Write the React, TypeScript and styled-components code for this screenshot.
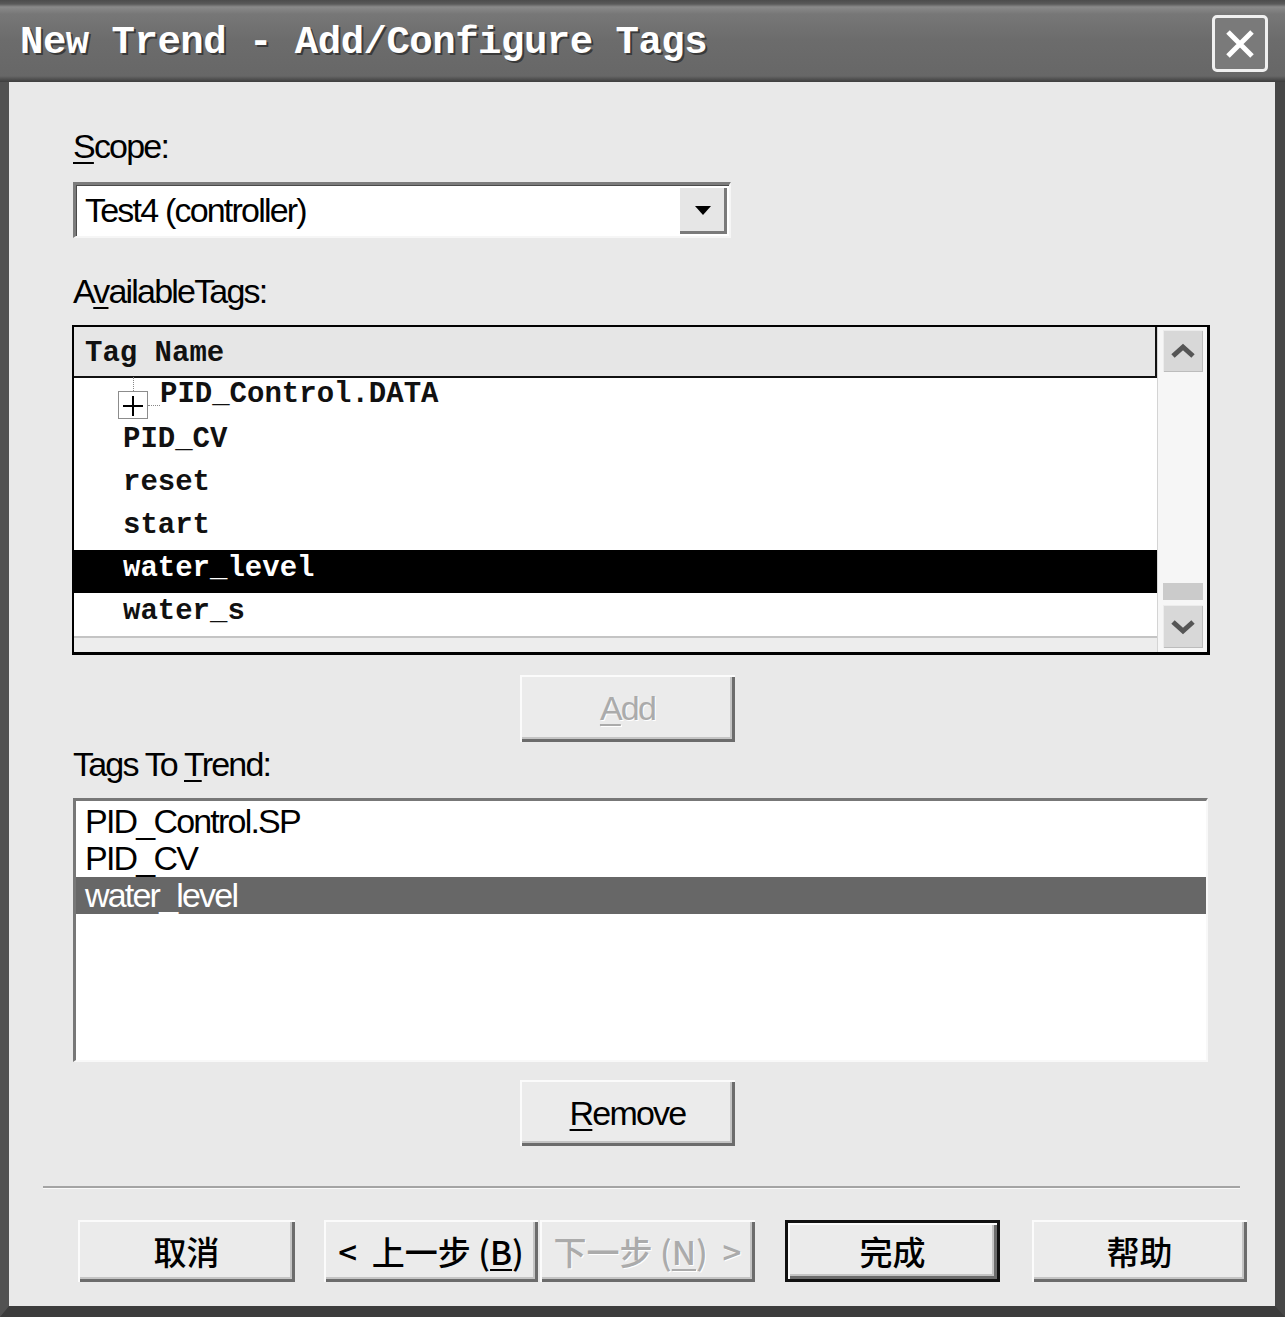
import React from "react";
import styled, { createGlobalStyle } from "styled-components";

const UI_FONT = `"Liberation Sans", Arial, sans-serif`;
const MONO_FONT = `"Liberation Mono", "Courier New", monospace`;
const CJK_FONT = `"Noto Sans CJK SC", "Liberation Sans", sans-serif`;

const GlobalStyle = createGlobalStyle`
  html, body {
    margin: 0;
    padding: 0;
    background: #3c3c3c;
  }
  body {
    font-family: ${UI_FONT};
  }
`;

const Window = styled.div`
  width: 1285px;
  height: 1317px;
  display: flex;
  flex-direction: column;
  overflow: hidden;
`;

const TitleBar = styled.div`
  height: 82px;
  flex: none;
  box-sizing: border-box;
  display: flex;
  align-items: center;
  justify-content: space-between;
  padding: 0 17px 0 20px;
  background: linear-gradient(
    to bottom,
    #4c4c4c 0,
    #5a5a5a 4px,
    #8a8a8a 7px,
    #777777 14px,
    #6c6c6c 40px,
    #676767 76px,
    #4a4a4a 80px,
    #3e3e3e 82px
  );
`;

const Title = styled.div`
  font-family: ${MONO_FONT};
  font-weight: bold;
  font-size: 39px;
  letter-spacing: -0.5px;
  color: #fff;
  text-shadow: 2px 2px 0 #3a3a3a;
  margin-top: 4px;
`;

const CloseButton = styled.div`
  width: 56px;
  height: 57px;
  margin-top: 5px;
  box-sizing: border-box;
  border: 3px solid #f0f0f0;
  border-radius: 5px;
  background: #7a7a7a;
  display: flex;
  align-items: center;
  justify-content: center;
`;

const Body = styled.div`
  flex: 1;
  display: flex;
  flex-direction: column;
  background: #e9e9e9;
  border-left: 9px solid #525252;
  border-right: 10px solid #474747;
  border-bottom: 11px solid #3c3c3c;
`;

const Content = styled.div`
  display: flex;
  flex-direction: column;
  padding: 44px 0 0 64px;
`;

const Label = styled.div<{ $mt: number }>`
  margin-top: ${(p) => p.$mt}px;
  font-family: ${UI_FONT};
  font-size: 34px;
  line-height: 40px;
  letter-spacing: -1.8px;
  color: #000;
`;

const Key = styled.span`
  text-decoration: underline;
  text-decoration-thickness: 2px;
  text-underline-offset: 4px;
`;

const Combo = styled.div`
  margin-top: 16px;
  width: 658px;
  height: 56px;
  box-sizing: border-box;
  background: #fff;
  border-top: 3px solid #7c7c7c;
  border-left: 3px solid #7c7c7c;
  border-right: 2px solid #f6f6f6;
  border-bottom: 2px solid #f6f6f6;
  box-shadow: inset 1px 1px 0 #4a4a4a;
  display: flex;
  align-items: center;
  justify-content: space-between;
  padding: 0 2px 0 9px;
  font-family: ${UI_FONT};
  font-size: 34px;
  letter-spacing: -1.8px;
`;

const DropButton = styled.div`
  width: 48px;
  height: 47px;
  box-sizing: border-box;
  background: #e6e6e6;
  box-shadow: inset 1px 1px 0 #fff, inset -3px -3px 0 #7a7a7a;
  display: flex;
  align-items: center;
  justify-content: center;
`;

const TagList = styled.div`
  margin-top: 14px;
  margin-left: -1px;
  width: 1138px;
  height: 330px;
  box-sizing: border-box;
  border: 2px solid #000;
  border-right-width: 3px;
  border-bottom-width: 3px;
  background: #fff;
  display: flex;
`;

const TagMain = styled.div`
  flex: 1;
  display: flex;
  flex-direction: column;
`;

const TagHeader = styled.div`
  height: 51px;
  flex: none;
  box-sizing: border-box;
  background: #e6e6e6;
  border-bottom: 2px solid #111;
  border-right: 2px solid #111;
  padding: 4px 0 0 11px;
  display: flex;
  align-items: center;
  font-family: ${MONO_FONT};
  font-weight: bold;
  font-size: 29px;
  color: #111;
`;

const TagRow = styled.div<{ $selected?: boolean }>`
  height: 43px;
  flex: none;
  display: flex;
  align-items: flex-start;
  padding-left: 49px;
  background: ${(p) => (p.$selected ? "#000" : "#fff")};
  color: ${(p) => (p.$selected ? "#fff" : "#111")};
  font-family: ${MONO_FONT};
  font-weight: bold;
  font-size: 29px;
  line-height: 38px;
`;

const TreeRow = styled(TagRow)`
  padding-left: 44px;
  line-height: 33px;
`;

const Expander = styled.div`
  position: relative;
  width: 30px;
  height: 28px;
  margin-top: 13px;
  flex: none;
  box-sizing: border-box;
  border: 1px solid #8c8c8c;
  background: #fff;

  &::before {
    content: "";
    position: absolute;
    left: 14px;
    top: -15px;
    height: 14px;
    border-left: 1px dotted #888;
  }
  &::after {
    content: "";
    position: absolute;
    left: 29px;
    top: 13px;
    width: 12px;
    border-top: 1px dotted #888;
  }
`;

const TreeText = styled.span`
  margin-left: 12px;
`;

const HScrollStub = styled.div`
  flex: 1;
  background: #ededed;
  border-top: 2px solid #c4c4c4;
`;

const VScroll = styled.div`
  width: 50px;
  flex: none;
  box-sizing: border-box;
  background: #f6f6f6;
  border-left: 1px solid #d4d4d4;
  display: flex;
  flex-direction: column;
  padding: 3px 4px 4px 5px;
`;

const ScrollButton = styled.div<{ $h: number }>`
  height: ${(p) => p.$h}px;
  flex: none;
  box-sizing: border-box;
  background: #d8d8d8;
  box-shadow: inset 1px 1px 0 #ececec, inset -1px -1px 0 #bcbcbc;
  display: flex;
  align-items: center;
  justify-content: center;
`;

const ScrollTrack = styled.div`
  flex: 1;
`;

const ScrollThumb = styled.div`
  height: 17px;
  flex: none;
  margin-bottom: 5px;
  background: #cbcbcb;
`;

const ButtonLine = styled.div<{ $mt: number }>`
  margin-top: ${(p) => p.$mt}px;
  padding-left: 447px;
  display: flex;
`;

const DlgButton = styled.button<{ $w: number; $h: number; $default?: boolean; $off?: boolean; $cjk?: boolean }>`
  width: ${(p) => p.$w}px;
  height: ${(p) => p.$h}px;
  flex: none;
  box-sizing: border-box;
  margin: 0;
  padding: 0;
  background: #ebebeb;
  border: ${(p) => (p.$default ? "3px solid #111" : "none")};
  box-shadow: inset 2px 2px 0 #fbfbfb, inset -3px -3px 0 #6c6c6c, inset -5px -5px 0 #c4c4c4;
  font-family: ${(p) => (p.$cjk ? CJK_FONT : UI_FONT)};
  font-size: ${(p) => (p.$cjk ? 33 : 34)}px;
  font-weight: ${(p) => (p.$cjk ? 500 : 400)};
  letter-spacing: ${(p) => (p.$cjk ? "0" : "-1.8px")};
  color: ${(p) => (p.$off ? "#ababab" : "#000")};
  text-shadow: ${(p) => (p.$off ? "1px 1px 0 #fff" : "none")};
  white-space: pre;
  display: flex;
  align-items: center;
  justify-content: center;
  cursor: default;
`;

const TrendList = styled.div`
  margin-top: 14px;
  width: 1135px;
  height: 264px;
  box-sizing: border-box;
  background: #fff;
  border-top: 3px solid #777;
  border-left: 3px solid #777;
  border-right: 2px solid #f8f8f8;
  border-bottom: 2px solid #f8f8f8;
  padding-top: 2px;
  display: flex;
  flex-direction: column;
`;

const TrendRow = styled.div<{ $selected?: boolean }>`
  height: 37px;
  flex: none;
  padding-left: 9px;
  background: ${(p) => (p.$selected ? "#676767" : "transparent")};
  color: ${(p) => (p.$selected ? "#fff" : "#000")};
  font-family: ${UI_FONT};
  font-size: 34px;
  line-height: 37px;
  letter-spacing: -1.8px;
  white-space: nowrap;
`;

const Separator = styled.div`
  margin: 40px 0 0 34px;
  width: 1197px;
  height: 3px;
  box-sizing: border-box;
  border-top: 2px solid #a4a4a4;
  border-bottom: 1px solid #fafafa;
`;

const Footer = styled.div`
  margin-top: 31px;
  padding-left: 69px;
  display: flex;
`;

const Gap = styled.div<{ $w: number }>`
  width: ${(p) => p.$w}px;
  flex: none;
`;

const Chevron = ({ dir }: { dir: "up" | "down" }) => (
  <svg width="26" height="16" viewBox="0 0 26 16">
    <polyline
      points={dir === "up" ? "3,13 13,4 23,13" : "3,3 13,12 23,3"}
      fill="none"
      stroke="#555"
      strokeWidth="5"
    />
  </svg>
);

const tags = ["PID_CV", "reset", "start", "water_level", "water_s"];
const trended = ["PID_Control.SP", "PID_CV", "water_level"];

export default function App() {
  return (
    <>
      <GlobalStyle />
      <Window>
        <TitleBar>
          <Title>New Trend - Add/Configure Tags</Title>
          <CloseButton>
            <svg width="34" height="34" viewBox="0 0 34 34">
              <path d="M5 5 L29 29 M29 5 L5 29" stroke="#fff" strokeWidth="5" />
            </svg>
          </CloseButton>
        </TitleBar>
        <Body>
          <Content>
            <Label $mt={0}>
              <Key>S</Key>cope:
            </Label>
            <Combo>
              <span>Test4 (controller)</span>
              <DropButton>
                <svg width="16" height="9" viewBox="0 0 16 9">
                  <polygon points="0,0 16,0 8,9" fill="#000" />
                </svg>
              </DropButton>
            </Combo>

            <Label $mt={33}>
              A<Key>v</Key>ailableTags:
            </Label>
            <TagList>
              <TagMain>
                <TagHeader>Tag Name</TagHeader>
                <TreeRow>
                  <Expander>
                    <svg width="28" height="26" viewBox="0 0 28 26">
                      <path d="M4 14 H24 M14 4 V24" stroke="#000" strokeWidth="2" />
                    </svg>
                  </Expander>
                  <TreeText>PID_Control.DATA</TreeText>
                </TreeRow>
                {tags.map((t) => (
                  <TagRow key={t} $selected={t === "water_level"}>
                    {t}
                  </TagRow>
                ))}
                <HScrollStub />
              </TagMain>
              <VScroll>
                <ScrollButton $h={42}>
                  <Chevron dir="up" />
                </ScrollButton>
                <ScrollTrack />
                <ScrollThumb />
                <ScrollButton $h={43}>
                  <Chevron dir="down" />
                </ScrollButton>
              </VScroll>
            </TagList>

            <ButtonLine $mt={20}>
              <DlgButton $w={215} $h={67} $off>
                <span>
                  <Key>A</Key>dd
                </span>
              </DlgButton>
            </ButtonLine>

            <Label $mt={2}>
              Tags To <Key>T</Key>rend:
            </Label>
            <TrendList>
              {trended.map((t) => (
                <TrendRow key={t} $selected={t === "water_level"}>
                  {t}
                </TrendRow>
              ))}
            </TrendList>

            <ButtonLine $mt={18}>
              <DlgButton $w={215} $h={66}>
                <span>
                  <Key>R</Key>emove
                </span>
              </DlgButton>
            </ButtonLine>
          </Content>

          <Separator />

          <Footer>
            <DlgButton $w={217} $h={62} $cjk>
              取消
            </DlgButton>
            <Gap $w={29} />
            <DlgButton $w={214} $h={62} $cjk>
              <span>
                {"<  上一步 ("}
                <Key>B</Key>)
              </span>
            </DlgButton>
            <Gap $w={2} />
            <DlgButton $w={215} $h={62} $cjk $off>
              <span>
                {"下一步 ("}
                <Key>N</Key>
                {")  >"}
              </span>
            </DlgButton>
            <Gap $w={30} />
            <DlgButton $w={215} $h={62} $cjk $default>
              完成
            </DlgButton>
            <Gap $w={32} />
            <DlgButton $w={215} $h={62} $cjk>
              帮助
            </DlgButton>
          </Footer>
        </Body>
      </Window>
    </>
  );
}
